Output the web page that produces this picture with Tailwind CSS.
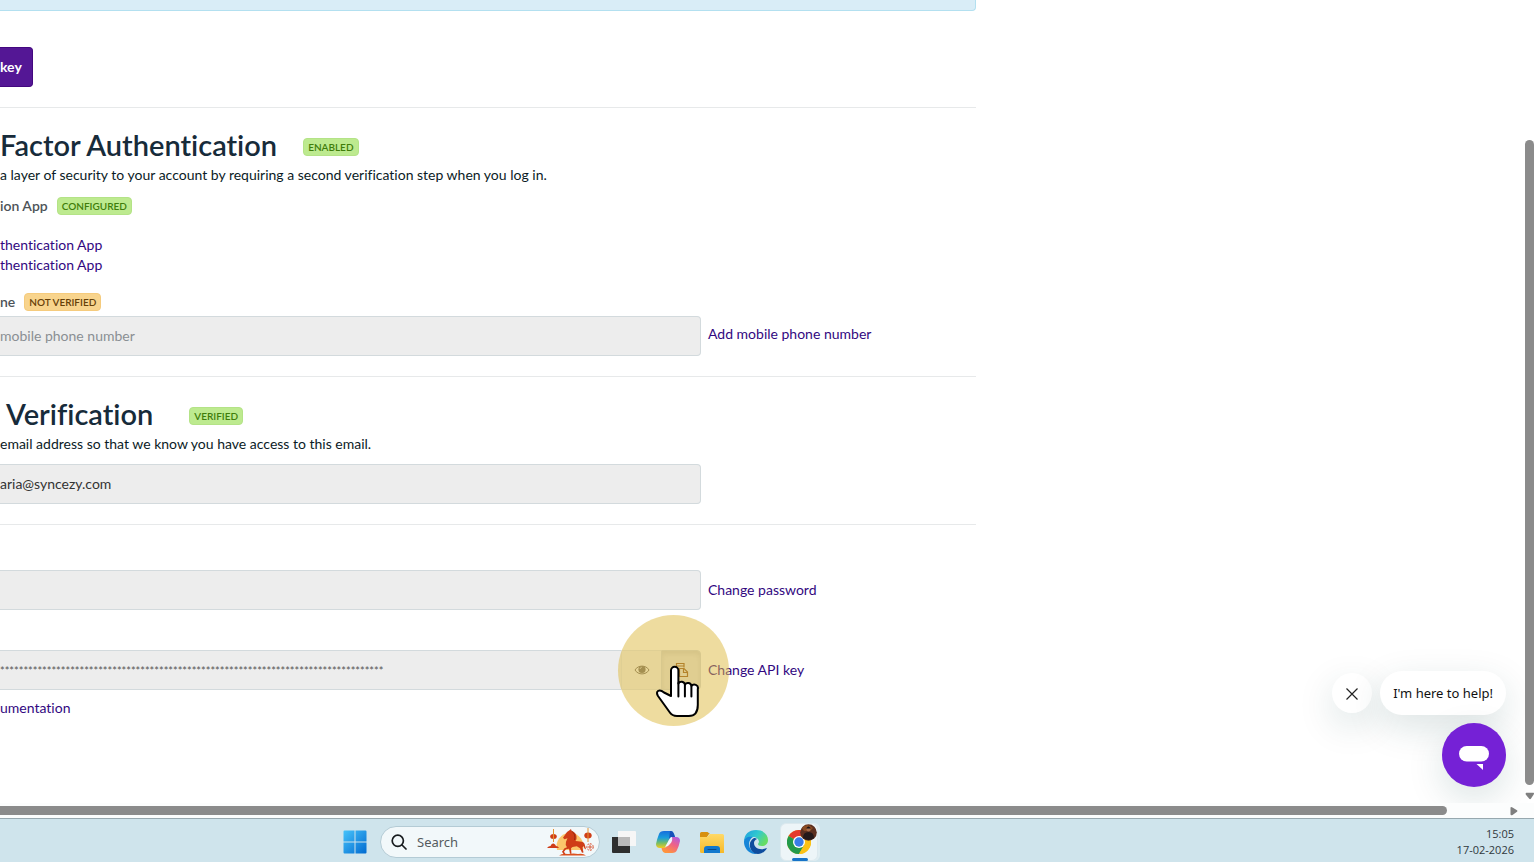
<!DOCTYPE html>
<html lang="en">
<head>
<meta charset="utf-8">
<title>Account settings</title>
<script src="https://cdn.jsdelivr.net/npm/@tailwindcss/browser@4"></script>
</head>
<body class="flex h-screen flex-col overflow-hidden bg-white font-['Lato',sans-serif] text-sm leading-5 text-[#0b1b26] [font-variant-ligatures:none]">
<div class="relative flex min-h-0 flex-1 overflow-hidden">
  <main class="min-w-0 flex-1 overflow-hidden">
    <div class="w-full max-w-[976px]">
      <div class="h-[11px] rounded-br border-r border-b border-[#b3e0f0] bg-[#d9edf7]"></div>
      <div class="border-b border-[#e7e9ea] pt-9 pb-5">
        <button type="button" class="flex h-10 items-center rounded-r border border-l-0 border-[#43087f] bg-[#541795] pr-2.5 font-bold text-white">key</button>
      </div>

      <section class="border-b border-[#e7e9ea] pt-[18px] pb-5">
        <div class="mb-px flex h-[38px] items-center gap-[26px]">
          <h2 class="text-[29px] font-semibold text-[#172b3a]">Factor Authentication</h2>
          <span class="mt-1 flex h-[18px] items-center rounded border border-[#b4e387] bg-[#bdea8f] px-1 text-[10px] font-semibold text-[#3f7d0a]">ENABLED</span>
        </div>
        <p>a layer of security to your account by requiring a second verification step when you log in.</p>
        <div class="mt-3 flex h-[18px] items-center gap-[9px]">
          <h3 class="font-semibold text-[#4d5358]">ion App</h3>
          <span class="flex h-[18px] items-center rounded border border-[#b4e387] bg-[#bdea8f] px-1 text-[10px] font-semibold text-[#3f7d0a]">CONFIGURED</span>
        </div>
        <ul class="mt-5 text-[#32087f]">
          <li><a href="#">thentication App</a></li>
          <li><a href="#">thentication App</a></li>
        </ul>
        <div class="mt-[18px] flex h-[18px] items-center gap-[9px]">
          <label for="phone" class="font-semibold text-[#4d5358]">ne</label>
          <span class="flex h-[18px] items-center rounded border border-[#f5cb7d] bg-[#f8d48d] px-1 text-[10px] font-semibold text-[#664008]">NOT VERIFIED</span>
        </div>
        <div class="mt-[5px] flex items-center gap-[7px]">
          <input id="phone" type="text" disabled placeholder="mobile phone number" class="h-10 w-[701px] rounded-r border border-l-0 border-[#d3dadd] bg-[#ededed] pb-0.5 placeholder:text-[#8a8f93]">
          <a href="#" class="mb-1 text-[#32087f]">Add mobile phone number</a>
        </div>
      </section>

      <section class="border-b border-[#e7e9ea] pt-[18px] pb-5">
        <div class="mb-px flex h-[38px] items-center gap-9">
          <h2 class="ml-1.5 text-[29px] font-semibold text-[#172b3a]">Verification</h2>
          <span class="mt-1 flex h-[18px] items-center rounded border border-[#b4e387] bg-[#bdea8f] px-1 text-[10px] font-semibold text-[#3f7d0a]">VERIFIED</span>
        </div>
        <p>email address so that we know you have access to this email.</p>
        <input type="text" disabled aria-label="Email address" value="aria@syncezy.com" class="mt-[10px] block h-10 w-[701px] rounded-r border border-l-0 border-[#d3dadd] bg-[#ededed] pb-0.5 text-[#333]">
      </section>

      <section class="pt-[45px]">
        <div class="flex items-center gap-[7px]">
          <input type="password" disabled aria-label="Password" class="h-10 w-[701px] rounded-r border border-l-0 border-[#d3dadd] bg-[#ededed]">
          <a href="#" class="text-[#32087f]">Change password</a>
        </div>
        <div class="mt-10 flex items-center gap-[7px]">
          <div class="relative flex h-10 w-[701px]">
            <input type="text" disabled aria-label="API key" value="**********************************************************************************" class="min-w-0 flex-1 border-y border-[#d3dadd] bg-[#ededed] pt-0.5 text-[11px] text-[#555]">
            <button type="button" aria-label="Show API key" class="flex w-10 items-center justify-center border border-r-0 border-[#e0e5e8] bg-[#f0f0f0] text-[#6b6460]">
              <svg class="h-4 w-4" viewBox="0 0 16 16" fill="none" stroke="currentColor"><path d="M1 8C4 2.800 12 2.800 15 8C12 13.200 4 13.200 1 8Z"/><circle cx="8" cy="7.500" r="3.600" fill="currentColor" stroke="none"/><path d="M6 7q.2-1.500 1.800-1.800" stroke="#ddd" stroke-width=".8"/></svg>
            </button>
            <button type="button" aria-label="Copy API key" class="flex w-10 items-center justify-center rounded-r border border-[#d2d7da] bg-[#e3e3e3] text-[#8a4d16] shadow-[inset_0_3px_5px_#00000018]">
              <svg class="h-4 w-4" viewBox="0 0 16 16" fill="none" stroke="currentColor" stroke-width="1.200"><path d="M3.500 5V1.500H11v4M3.500 4H11"/><path d="M6.500 6.500h4.500l3.500 3.500v4.500h-8z"/><path d="M10.500 6.500v4H14.500"/></svg>
            </button>
            <span class="absolute -top-[35px] -right-7 h-[111px] w-[111px] rounded-full bg-[#ddb940]/50"></span>
            <svg class="absolute top-[13px] right-0 z-10 h-[56px] w-[46px]" viewBox="0 0 46 56" fill="#fff" stroke="#000" stroke-width="2" stroke-linejoin="round" stroke-linecap="round"><path d="M16 33V7.500a3.700 3.700 0 0 1 7.400 0V20.500a3.500 3.500 0 0 1 6.500 1.200a3.500 3.500 0 0 1 6.500 1.600a3.500 3.500 0 0 1 6.400 2.700V42q0 11-9 11H22q-5 0-7.500-4L3 33q-2-3.500 0-5q2.500-1.500 6 1.500z"/><path d="M23.400 20v13.500M29.900 22v11.500M36.400 24v9.500"/></svg>
          </div>
          <a href="#" class="text-[#32087f]">Change API key</a>
        </div>
        <a href="#" class="mt-2 block text-[#32087f]">umentation</a>
      </section>
    </div>
  </main>

  <aside class="absolute right-7 bottom-4 flex flex-col items-end gap-2" aria-label="Chat">
    <div class="flex items-center gap-2 font-['Noto_Sans',sans-serif] text-[13px] text-[#111]">
      <button type="button" aria-label="Close" class="flex h-10 w-10 items-center justify-center rounded-full bg-white shadow-[0_12px_36px_#10404026]">
        <svg class="mt-0.5 h-3 w-3" viewBox="0 0 12 12" stroke="#222" stroke-width="1.200"><path d="M.5.5l11 11M11.500.5L.5 11.500"/></svg>
      </button>
      <button type="button" class="h-11 rounded-3xl bg-white px-[13px] shadow-[0_12px_36px_#10404026]">I'm here to help!</button>
    </div>
    <button type="button" aria-label="Open chat" class="h-16 w-16 rounded-full bg-[#7521d6] shadow-[0_12px_36px_#10404026]">
      <svg viewBox="0 0 64 64"><rect x="17" y="23" width="30" height="15.500" rx="7.700" fill="#fff"/><path d="M34.500 41H41v6z" fill="#fff"/></svg>
    </button>
  </aside>
  <div class="relative flex w-[9px] flex-col items-center pt-[140px]">
    <div class="min-h-0 w-full flex-1 rounded-full bg-[#8b8b8b]"></div>
    <svg class="mt-[7px] mb-[3px] h-[8px] w-[9px] shrink-0" viewBox="0 0 10 8" fill="#7f7f7f"><path d="M1.500.500h8q1 .5 0 2L6.500 7q-.9 1-1.800 0L1 2.500q-.8-1.500.5-2z"/></svg>
  </div>
</div>
<div class="flex h-[15px] shrink-0 items-center bg-[#fcfdfd] pr-4">
  <div class="h-[9px] w-[1447px] shrink rounded-r-full bg-[#8b8b8b]"></div>
  <svg class="ml-auto h-[10px] w-2 shrink-0" viewBox="0 0 8 10" fill="#7f7f7f"><path d="M.5 1.500q.5-1 2 0L7 4.200q1 .8 0 1.600L2.500 9q-1.500.8-2-.5z"/></svg>
</div>

<footer class="flex h-11 shrink-0 items-center border-t border-[#97a8af] bg-[#cfe4ec] pt-0.5 pr-5 pl-[343px] font-['Noto_Sans',sans-serif]">
  <button type="button" aria-label="Start" class="h-6 w-6">
    <svg viewBox="0 0 24 24"><defs><linearGradient id="win" x1="0" y1="0" x2="24" y2="24" gradientUnits="userSpaceOnUse"><stop stop-color="#48c5fb"/><stop offset="1" stop-color="#0068cf"/></linearGradient></defs><path fill="url(#win)" d="M.5 1.500q0-1 1-1h10v11H.5zM12.500.5h10q1 0 1 1v10h-11zM.5 12.500h11v11h-10q-1 0-1-1zM12.500 12.500h11v10q0 1-1 1h-10z"/></svg>
  </button>
  <label class="ml-[13px] flex h-8 w-[220px] items-center rounded-full border border-[#b4cbd5] bg-[#f2f8fa] pl-2.5">
    <svg class="h-4 w-4 shrink-0" viewBox="0 0 16 16" fill="none" stroke="#171b1e" stroke-width="1.700" stroke-linecap="round"><circle cx="6.800" cy="6.800" r="5.600"/><path d="M11 11l4 4"/></svg>
    <input type="text" aria-label="Search" placeholder="Search" class="ml-[10px] w-0 min-w-0 flex-1 text-[13px] placeholder:text-[#555b5f]">
    <svg class="mr-1 h-7 w-12 shrink-0" viewBox="0 0 48 28"><path d="M10 22A13.500 13.500 0 1 1 36 22z" fill="#fbc66a"/><g fill="#cf3d17"><path d="M12 27.500q3-2.500 9-1.500 6-1 10 0 5-1 8 1.500z" fill="#dc5320"/><path d="M20 4q3-2 4-3l.5 2q4.500 1 5 5.500.5 2.500-1 4.500l4.500.5q4.500 0 5 4l1 4-1.500-1-1-2.500-1 1.500 1 5-1.500.3-2-4.500-3.200-2-4.300.700-1.500 1.300.5 5.500h-1.500l-1-5-3 .5-2 2.500 1.500 2.500-1.500.5-2-3 2.500-3.500 2.500-1q-2-2.500-1-5.500l1.500-3.500-3 1-1.500-1.500z"/><path d="M0 20q1.500-2 3.500-2 1-3 3-2.500 2 .5 2.500 2.500 2 0 3 2z"/><ellipse cx="6.500" cy="8.500" rx="3.300" ry="2.500"/><ellipse cx="41" cy="7.500" rx="3.700" ry="3"/></g><path d="M6.500 1v13M41 0v14" stroke="#e39232"/><path d="M24.500 3q4.500 3 3 9" stroke="#99290f" fill="none"/><g fill="none" stroke="#d64c29" stroke-width=".9"><circle cx="43" cy="19" r="3.300" stroke-dasharray="2 1"/><path d="M43 16.500v5M40.500 19h5"/></g></svg>
  </label>
  <nav class="ml-3 flex items-center gap-5" aria-label="Taskbar">
    <button type="button" aria-label="Task view" class="h-6 w-6"><svg viewBox="0 0 24 24"><path fill="#2e2e2e" d="M0 7h18v16H1q-1 0-1-1z"/><path fill="#f6f6f6" d="M6 1h17q1 0 1 1v14H6z"/><path fill="#b9b9b9" d="M6 7h12v9H6z"/></svg></button>
    <button type="button" aria-label="Copilot" class="h-6 w-6"><svg viewBox="0 0 24 24"><defs><linearGradient id="cpa" x2="0" y2="1"><stop stop-color="#176edc"/><stop offset=".4" stop-color="#199ddc"/><stop offset=".7" stop-color="#73bd69"/><stop offset="1" stop-color="#f5ca1b"/></linearGradient><linearGradient id="cpb" x1="1" y1="0" x2=".4" y2="1"><stop stop-color="#a75bee"/><stop offset=".5" stop-color="#ee6288"/><stop offset="1" stop-color="#ff943d"/></linearGradient></defs><path d="M8 1h7q2 0 3 3l1 3h-3q-2 0-3 3l-2 6q-1 2-3 2H4q-4 0-4-4 1-5 3-10 1-3 5-3z" fill="url(#cpa)"/><path d="M16 7h4q4 0 4 4-1 5-3 9-1 3-5 3H9q-2 0-3-3l-.5-2H8q2 0 3-2l2-6q1-3 3-3z" fill="url(#cpb)"/><path d="M14 1h1q2 0 3 3l1 3h-3q-2 0-3 3z" fill="#1752ba"/><path d="M14 8l-5 9q3 0 5-3 3-3 2-7-1 0-2 1z" fill="#eff6fd"/></svg></button>
    <button type="button" aria-label="File Explorer" class="h-6 w-6"><svg viewBox="0 0 24 24"><defs><linearGradient id="fold" x2="0" y2="1"><stop stop-color="#ffd967"/><stop offset="1" stop-color="#f7b928"/></linearGradient></defs><path d="M0 3.500Q0 2 1.500 2h6L10 4h-1L7 7H0z" fill="#d8900e"/><path d="M0 7h7l3-3h12.500Q24 4 24 5.500V23H1.500Q0 23 0 21.500z" fill="url(#fold)"/><path d="M4 23v-4q0-3 3-3h10q3 0 3 3v4z" fill="#1278cd"/><path d="M8 19.500h8" stroke="#0b4a89" stroke-linecap="round"/></svg></button>
    <button type="button" aria-label="Edge" class="h-6 w-6"><svg viewBox="0 0 24 24"><defs><linearGradient id="edg" y2=".5"><stop stop-color="#1c9de2"/><stop offset=".55" stop-color="#31c9cf"/><stop offset="1" stop-color="#66dd64"/></linearGradient></defs><path d="M0 12C0 4 5 0 12 0c8 0 12 5 12 10 0 4-3 6-6 6-3 0-4-1-4-2l1-2c0-3-3-5-6-5C4 7 0 9 0 12z" fill="url(#edg)"/><path d="M0 12C0 8 4 6 9 7c-2 1-4 4-4 7 0 5 4 9 9 10C5 25 0 18 0 12z" fill="#1685d8"/><path d="M10 8c-3 2-5 5-4 9 1 4 4 7 8 7 4-.5 7-2 9-6-7 3-13 0-13-5 0-2 1-3 3-4-1-1-2-1-3-1z" fill="#0e4d9e"/></svg></button>
    <button type="button" aria-label="Chrome" class="relative -ml-2 flex h-[38px] w-[38px] items-center justify-center rounded-md border border-[#dce9ee] bg-[#edf5f8] shadow-[2px_0_0_#dfedf2]">
      <svg class="h-6 w-6" viewBox="0 0 24 24"><circle cx="12" cy="12" r="12" fill="#fbc116"/><path d="M12 12L1.600 6A12 12 0 0 1 22.400 6z" fill="#e33b2e"/><path d="M12 12L1.600 6A12 12 0 0 0 12 24l5.200-9z" fill="#229a4b"/><path d="M12 6h10.400A12 12 0 0 1 12 24l5.200-9z" fill="#fbc116"/><circle cx="12" cy="12" r="6" fill="#fff"/><circle cx="12" cy="12" r="4.700" fill="#397de9"/></svg>
      <svg class="absolute top-0 right-0 h-[17px] w-[17px]" viewBox="0 0 17 17"><circle cx="8.500" cy="8.500" r="8.300" fill="#5d3020"/><path d="M2 4q5-6 11 0l-3 3H4z" fill="#8a4b22"/><circle cx="8.500" cy="5.500" r="2" fill="#a56b4a"/><path d="M3 14q0-6 5.500-6t5.500 6q-5 4-11 0z" fill="#24191a"/><path d="M6.500 4q2-3 4 0v.5h-4z" fill="#1c1214"/></svg>
      <span class="absolute -bottom-px left-[11px] h-[3px] w-4 rounded-full bg-[#1673c8]"></span>
    </button>
  </nav>
  <div class="ml-auto text-right font-['Open_Sans',sans-serif] text-[11px] leading-4 text-[#30383c]"><time class="block">15:05</time><time class="block">17-02-2026</time></div>
</footer>
</body>
</html>
